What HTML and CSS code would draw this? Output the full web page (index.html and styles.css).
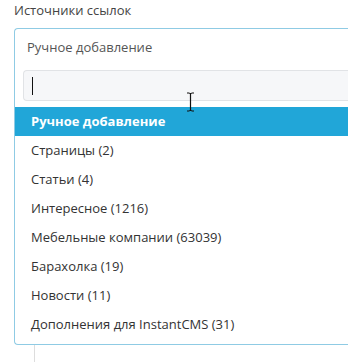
FILE: index.html
```html
<!DOCTYPE html>
<html lang="ru">
<head>
  <meta charset="UTF-8">
  <title>Источники ссылок</title>
  <link rel="stylesheet" href="styles.css">
</head>
<body>
  <div class="field">
    <div class="field-label">Источники ссылок</div>
    <div class="select">
      <div class="select-value">Ручное добавление</div>
      <div class="search">
        <span class="caret"></span>
        <svg class="ibeam" width="9" height="20" viewBox="0 0 9 20">
          <path d="M1 1h2.5M5.5 1H8M4.5 1.5v17M1 19h2.5M5.5 19H8M3.5 1.5h2M3.5 18.5h2" stroke="#111" stroke-width="1.2" fill="none"/>
        </svg>
      </div>
      <ul class="options">
        <li class="active">Ручное добавление</li>
        <li>Страницы (2)</li>
        <li>Статьи (4)</li>
        <li>Интересное (1216)</li>
        <li>Мебельные компании (63039)</li>
        <li>Барахолка (19)</li>
        <li>Новости (11)</li>
        <li>Дополнения для InstantCMS (31)</li>
      </ul>
    </div>
    <div class="tail"></div>
  </div>
</body>
</html>
```

FILE: styles.css
```css
body {
  margin: 0;
  background: #fff;
  font-family: 'Open Sans', 'Noto Sans', sans-serif;
  font-size: 13px;
  color: #333;
  overflow: hidden;
}
.field {
  padding-left: 14px;
}
.field-label {
  height: 28px;
  line-height: 20px;
  color: #444;
}
.select {
  border: 1px solid #8fcbe4;
  border-right: none;
  border-radius: 4px 0 0 4px;
  background: #fff;
}
.select-value {
  height: 41px;
  line-height: 36px;
  padding-left: 12px;
  color: #555;
}
.search {
  position: relative;
  margin-left: 8px;
  height: 29px;
  background: #f6f7f9;
  border: 1px solid #e1e3e6;
  border-right: none;
  border-radius: 4px 0 0 4px;
}
.caret {
  position: absolute;
  left: 8px;
  top: 6px;
  width: 1px;
  height: 18px;
  background: #111;
}
.ibeam {
  position: absolute;
  left: 162px;
  top: 21px;
}
.options {
  list-style: none;
  margin: 6px 0 0;
  padding: 0 0 5px;
}
.options li {
  height: 29px;
  line-height: 29px;
  padding-left: 16px;
  color: #333;
}
.options li.active {
  background: #21a6d8;
  color: #fff;
  font-weight: bold;
}
.tail {
  margin-left: 20px;
  width: 1px;
  height: 20px;
  background: #ddd;
}
```
